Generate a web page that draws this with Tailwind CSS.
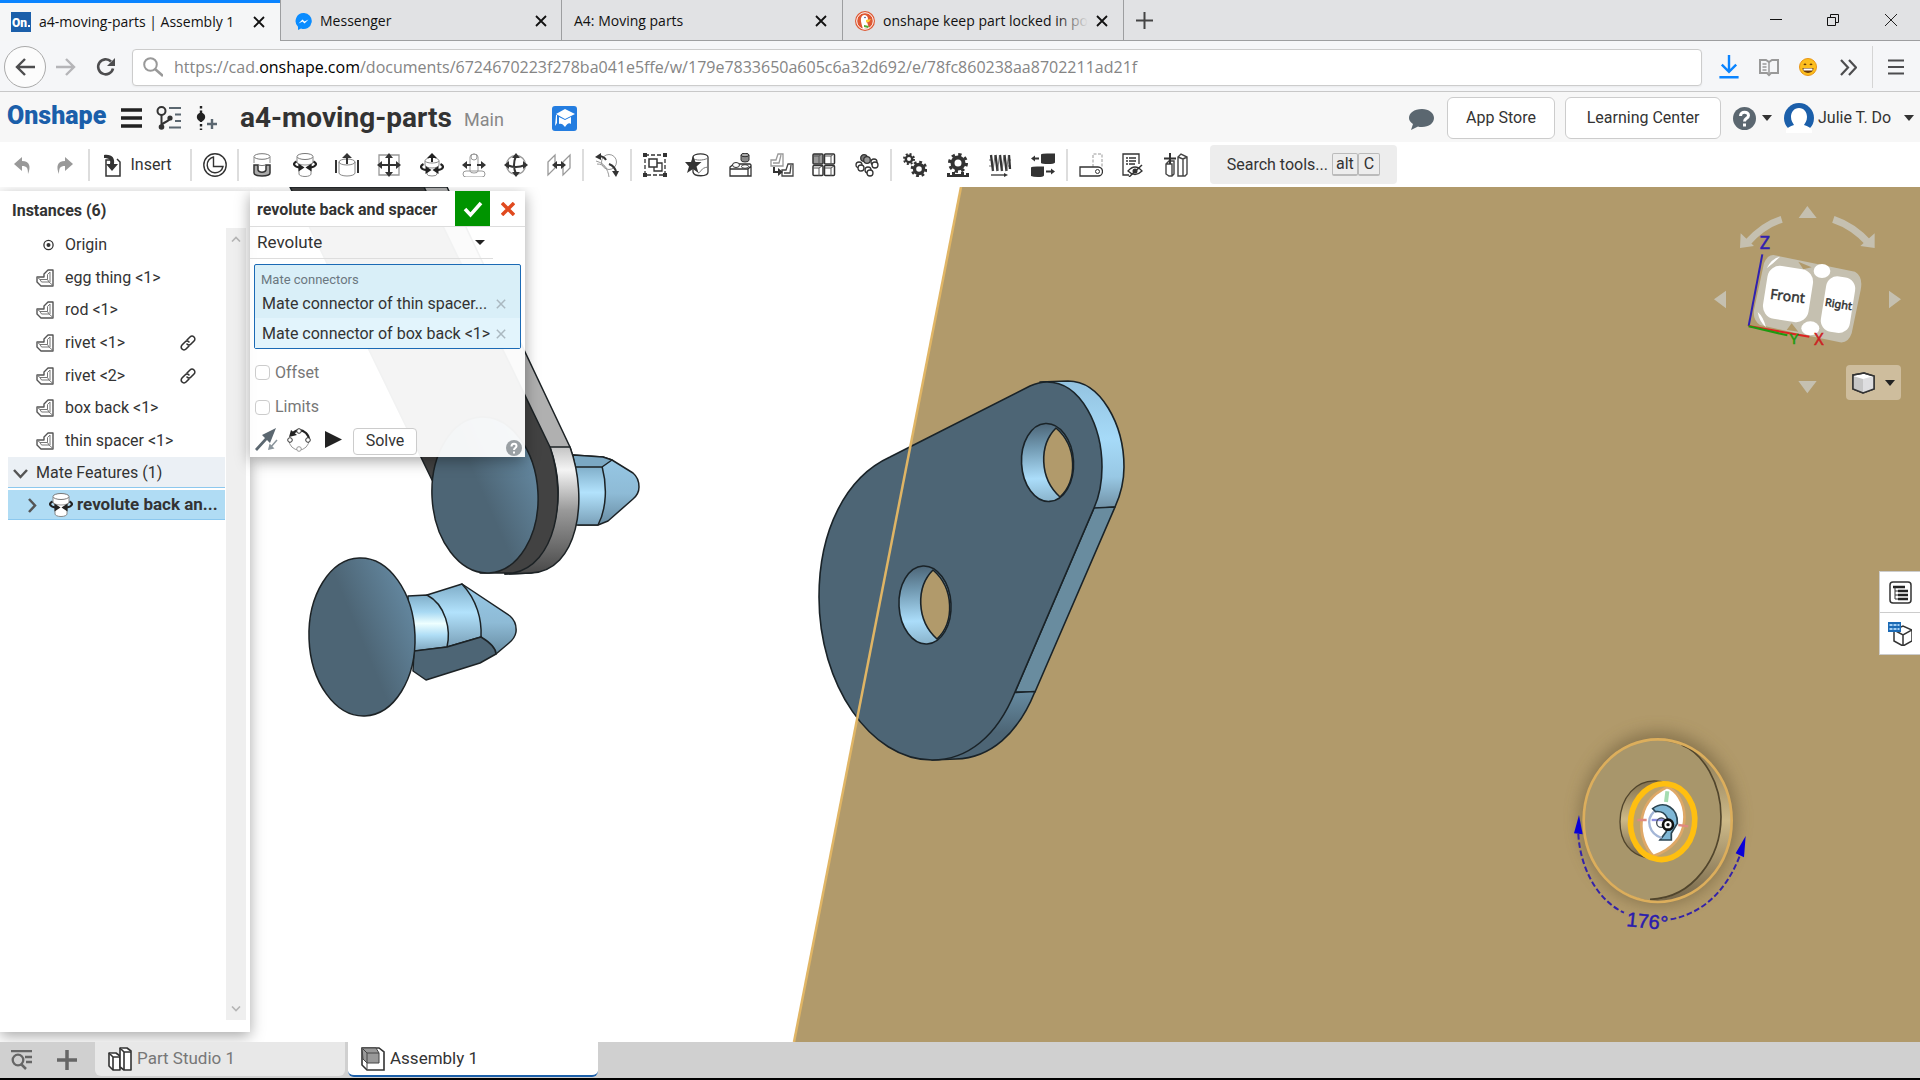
<!DOCTYPE html>
<html lang="en">
<head>
<meta charset="utf-8">
<title>a4-moving-parts | Assembly 1</title>
<script src="https://cdn.jsdelivr.net/npm/@tailwindcss/browser@4"></script>
</head>
<body class="flex h-screen flex-col overflow-hidden bg-white font-['Roboto',sans-serif] text-base text-[#333]">

<svg class="hidden" aria-hidden="true">
  <symbol id="part" viewBox="0 0 18 18"><path d="M1 8h7V5l4-4h5v16H5l-4-4z" fill="#fff" stroke="#555" stroke-width="1.400" stroke-linejoin="round"/><path d="M4 10.500h7.500V5.500L14 3v10M4 10.500L5.500 13H13l4 3.500M11.500 10.500L13 13M1 8l3 2.500" fill="none" stroke="#777"/></symbol>
  <symbol id="link" viewBox="0 0 16 16"><g fill="none" stroke="#333" stroke-width="1.600" stroke-linecap="round"><path d="M7 5l3-3a2.600 2.600 0 0 1 4 4l-3 3a2.600 2.600 0 0 1-4 0"/><path d="M9 11l-3 3a2.600 2.600 0 0 1-4-4l3-3a2.600 2.600 0 0 1 4 0"/></g></symbol>
  <symbol id="revolute" viewBox="0 0 24 24"><path d="M4 4v5c0 2 2 2 2 4v8a6 2.500 0 0 0 12 0v-8c0-2 2-2 2-4V4" fill="#fff" stroke="#888"/><path d="M4 9a8 3 0 0 0 16 0" fill="none" stroke="#999"/><ellipse cx="12" cy="3.500" rx="8" ry="3" fill="#fff" stroke="#777"/><path d="M3.500 8.500c-4 2-3 5 3 6M20.500 8.500c4 2 3 5-3 6" fill="none" stroke="#222" stroke-width="2.200"/><path d="M11.500 14.500l-6-4v8zM12.500 14.500l6-4v8z" fill="#222"/></symbol>
  <symbol id="close" viewBox="0 0 12 12"><path d="M1 1l10 10M11 1L1 11" fill="none" stroke="currentColor" stroke-width="1.800"/></symbol>
</svg>

<!-- Browser tabs -->
<header class="shrink-0 font-['Open_Sans',sans-serif] text-sm text-[#111]">
  <div class="flex h-[41px] border-b border-[#9d9ea0] bg-[#e1e2e4]">
    <div class="-mb-px flex w-[280px] items-center gap-2 border-t-[3px] border-[#0a84ff] bg-[#f5f6f7] pr-[15px] pb-px pl-[11px]">
      <svg class="size-5 shrink-0" viewBox="0 0 20 20"><path d="M0 0h20v20H0z" fill="#1b5faa"/><text x="1" y="15" font-family="Roboto" font-weight="900" font-size="12" fill="#fff">On</text><path d="M17 13h2v2h-2z" fill="#fff"/></svg>
      <span class="flex-1 whitespace-nowrap">a4-moving-parts | Assembly 1</span>
      <button aria-label="Close tab"><svg class="size-3"><use href="#close"/></svg></button>
    </div>
    <div class="flex w-[282px] items-center gap-2 border-r border-l border-[#9d9ea0] px-[14px] pt-[2px]">
      <svg class="size-[17px]" viewBox="0 0 17 17"><path d="M8.500 0a8 8 0 0 0-5.500 13.700V17l3-1.500A8 8 0 1 0 8.500 0z" fill="#0a8cff"/><path d="M3.500 10.500l4-4 2 2 4-2-4 4-2-2z" fill="#fff"/></svg>
      <span class="flex-1">Messenger</span>
      <button aria-label="Close tab"><svg class="size-3"><use href="#close"/></svg></button>
    </div>
    <div class="flex w-[281px] items-center gap-2 border-r border-[#9d9ea0] pt-[2px] pr-[15px] pl-3">
      <span class="flex-1">A4: Moving parts</span>
      <button aria-label="Close tab"><svg class="size-3"><use href="#close"/></svg></button>
    </div>
    <div class="flex w-[281px] items-center gap-2 border-r border-[#9d9ea0] pt-[2px] pr-[15px] pl-3">
      <svg class="size-5 shrink-0" viewBox="0 0 20 20"><circle cx="10" cy="10" r="10" fill="#de5833"/><circle cx="10" cy="10" r="8.300" fill="none" stroke="#fff"/><path d="M8 18C6 11 5 8 7 5c2-2 6-1 6 3l-1 3 2 6z" fill="#fff"/><path d="M11 9l5-1-2 3-3 .5z" fill="#fc3"/><path d="M9 14l5 1-1 2-4-1z" fill="#5a3"/><circle cx="10" cy="6.500" r=".8" fill="#2a4b8d"/></svg>
      <span class="relative flex-1 overflow-hidden whitespace-nowrap">onshape keep part locked in po<span class="absolute inset-y-0 right-0 w-8 bg-linear-to-r from-transparent to-[#e1e2e4]"></span></span>
      <button aria-label="Close tab"><svg class="size-3"><use href="#close"/></svg></button>
    </div>
    <button class="px-3" aria-label="New tab"><svg class="size-[17px]" viewBox="0 0 17 17"><path d="M8.500 0v17M0 8.500h17" stroke="#444" stroke-width="2"/></svg></button>
    <div class="ml-auto flex items-center gap-[45px] pr-[22px]">
      <button aria-label="Minimize"><svg class="size-3" viewBox="0 0 12 12"><path d="M0 5.500h12" stroke="#111"/></svg></button>
      <button aria-label="Restore"><svg class="size-3" viewBox="0 0 12 12"><path d="M.5 3.500h8v8h-8zM3.500 3.500v-3h8v8h-3" fill="none" stroke="#111"/></svg></button>
      <button aria-label="Close window"><svg class="size-[14px]" viewBox="0 0 14 14"><path d="M1 1l12 12M13 1L1 13" stroke="#222"/></svg></button>
    </div>
  </div>
  <!-- Address bar -->
  <div class="flex h-[51px] items-center border-b border-[#c8c8c8] bg-[#f5f6f8] pt-[2px] text-[#777]">
    <button class="ml-1 flex size-[42px] items-center justify-center rounded-full border border-[#aaa] bg-[#fcfcfc]" aria-label="Back"><svg class="size-5" viewBox="0 0 20 20"><path d="M20 10H2M10 2l-8 8 8 8" fill="none" stroke="#4d4d4f" stroke-width="2.400"/></svg></button>
    <button class="ml-[10px]" aria-label="Forward"><svg class="size-5" viewBox="0 0 20 20"><path d="M0 10h18M10 2l8 8-8 8" fill="none" stroke="#b5b5b8" stroke-width="2.400"/></svg></button>
    <button class="ml-5" aria-label="Reload"><svg class="size-5" viewBox="0 0 20 20"><path d="M17 11.500a7.500 7.500 0 1 1-2-7" fill="none" stroke="#4d4d4f" stroke-width="2.600"/><path d="M19 1v8h-8z" fill="#4d4d4f"/></svg></button>
    <div class="ml-4 flex h-[37px] flex-1 items-center gap-[11px] rounded-sm border border-[#ccc] bg-white px-[10px] shadow-xs">
      <svg class="size-5" viewBox="0 0 20 20"><circle cx="7.500" cy="7.500" r="6.300" fill="none" stroke="#999" stroke-width="2"/><path d="M12 12l8 7" stroke="#999" stroke-width="2.600"/></svg>
      <div role="textbox" aria-label="Address" contenteditable="true" class="text-base whitespace-nowrap text-[#858585]">https://cad.<span class="text-black">onshape.com</span>/documents/6724670223f278ba041e5ffe/w/179e7833650a605c6a32d692/e/78fc860238aa8702211ad21f</div>
    </div>
    <div class="flex items-center gap-5 pr-[15px] pl-[17px]">
      <button aria-label="Downloads"><svg class="h-6 w-5" viewBox="0 0 16 20"><path d="M8 0v13M2 8l6 6 6-6M0 18.500h16" fill="none" stroke="#0a84ff" stroke-width="2"/></svg></button>
      <button aria-label="Reader"><svg class="size-5" viewBox="0 0 20 18"><path d="M1 2h6l3 2 3-2h6v13h-7l-2 2-2-2H1z" fill="none" stroke="#999" stroke-width="2"/><path d="M10 4v11M3.500 6h4M3.500 9h4M3.500 12h4" stroke="#999" stroke-width="1.500"/></svg></button>
      <button aria-label="Emoji"><svg class="size-[18px]" viewBox="0 0 18 18"><circle cx="9" cy="9" r="8.500" fill="#fcbe1c" stroke="#e89515"/><path d="M3.500 10h11a5.500 5 0 0 1-11 0z" fill="#6b3a0a"/><path d="M4.500 10.500h9v2h-9z" fill="#fff"/><path d="M5 7q1-2 2 0M11 7q1-2 2 0" fill="none" stroke="#5b3208" stroke-width="1.200"/></svg></button>
      <button class="ml-[3px]" aria-label="More tools"><svg class="size-[17px]" viewBox="0 0 17 17"><path d="M1 1l7 7.500L1 16M9 1l7 7.500L9 16" fill="none" stroke="#4d4d4f" stroke-width="2.200"/></svg></button>
    </div>
    <div class="flex h-[42px] items-center border-l border-[#d5d5d5] pr-4 pl-[15px]"><button aria-label="Menu"><svg class="size-4" viewBox="0 0 16 16"><path d="M0 1.500h16M0 8h16M0 14.500h16" stroke="#4d4d4f" stroke-width="2"/></svg></button></div>
  </div>
</header>

<!-- Document header -->
<div class="flex h-[50px] shrink-0 items-center bg-[#f7f7f7] pt-[2px] pr-[6px] pl-[7px]">
  <a href="#" class="w-[98px] pb-1 text-[25px] font-black text-[#1b5faa]">Onshape</a>
  <button class="ml-4" aria-label="Main menu"><svg class="h-5 w-[21px]" viewBox="0 0 21 20"><path d="M0 2h21M0 10h21M0 18h21" stroke="#222" stroke-width="3.500"/></svg></button>
  <button class="ml-[14px]" aria-label="Versions"><svg class="size-[26px]" viewBox="0 0 26 26"><circle cx="5.500" cy="6" r="4" fill="none" stroke="#333" stroke-width="2"/><path d="M5.500 10v12M5.500 21c1-5 8-3 9-9" fill="none" stroke="#333" stroke-width="2"/><circle cx="5.500" cy="22" r="2.800" fill="#333"/><circle cx="14" cy="13" r="2.600" fill="#333"/><path d="M13 3h12M19 9.500h6M19 16h6M13 22.500h12" stroke="#5b6770" stroke-width="2"/></svg></button>
  <button class="ml-[14px]" aria-label="Create version"><svg class="h-6 w-[22px]" viewBox="0 0 22 24"><path d="M5 0v24" stroke="#222" stroke-width="2.400" stroke-dasharray="2.500 2"/><circle cx="5" cy="11" r="4.200" fill="#222"/><path d="M16 13v10M11 18h10" stroke="#5b6770" stroke-width="2.400"/></svg></button>
  <h1 class="ml-[22px] w-[216px] text-[28px] font-bold whitespace-nowrap">a4-moving-parts</h1>
  <span class="ml-2 w-[88px] pt-1 text-lg text-[#888]">Main</span>
  <button aria-label="Education"><svg class="size-[25px]" viewBox="0 0 25 25"><rect width="25" height="25" rx="3" fill="#247de0"/><path d="M13 3l10 5-10 5-9-5z" fill="#fff"/><path d="M7 11l6 3 6-3v7c-2-2-4 0-6 3-2-3-4-4-6-3zM4 9h1v8l-2 3z" fill="#fff"/></svg></button>
  <div class="ml-auto flex items-center">
    <button aria-label="Comments"><svg class="size-[25px]" viewBox="0 0 25 25"><path d="M13 3C20 3 25 7 25 12s-5 9-12 9c-2 0-3 0-4-.6L2 24l2-6C1 16 0 14 0 12c0-5 5-9 13-9z" fill="#5b6770"/></svg></button>
    <button class="ml-[13px] h-[42px] w-[108px] rounded-md border border-[#ccc] bg-white">App Store</button>
    <button class="ml-[10px] h-[42px] w-[156px] rounded-md border border-[#ccc] bg-white">Learning Center</button>
    <button class="ml-3 flex items-center gap-[6px]" aria-label="Help"><svg class="size-[23px]" viewBox="0 0 23 23"><circle cx="11.500" cy="11.500" r="11.500" fill="#5b6770"/><path d="M7.500 9c0-5 8-5 8-.5 0 3-4 2.500-4 6" fill="none" stroke="#fff" stroke-width="3"/><path d="M10 16.500h3v3h-3z" fill="#fff"/></svg><svg class="h-[6px] w-[10px]" viewBox="0 0 10 6"><path d="M0 0h10L5 6z" fill="#333"/></svg></button>
    <button class="ml-3 flex items-center gap-1"><svg class="size-[30px]" viewBox="0 0 30 30"><circle cx="15" cy="15" r="15" fill="#1b5faa"/><path d="M15 5c5 0 8 4 8 9 0 4-2 6-3 8 4 1 7 3 8 5v3H2v-3c1-2 4-4 8-5-1-2-3-4-3-8 0-5 3-9 8-9z" fill="#fff"/></svg><span class="w-[82px] text-left whitespace-nowrap">Julie T. Do</span><svg class="h-[6px] w-[10px]" viewBox="0 0 10 6"><path d="M0 0h10L5 6z" fill="#333"/></svg></button>
  </div>
</div>

<!-- Assembly toolbar -->
<div class="flex h-[45px] shrink-0 items-center bg-white [&_svg]:size-6 [&_button]:flex [&_button]:items-center [&_button]:justify-center">
  <div class="flex w-[86px]">
    <button class="flex-1" aria-label="Undo"><svg viewBox="0 0 24 24"><path d="M4 11l8-7v4c8 0 9 6 6 13 0-6-1-8-6-8v5z" fill="#999"/></svg></button>
    <button class="flex-1" aria-label="Redo"><svg viewBox="0 0 24 24"><path d="M20 11l-8-7v4c-8 0-9 6-6 13 0-6 1-8 6-8v5z" fill="#999"/></svg></button>
  </div>
  <div class="mx-[2px] h-8 w-[2px] bg-[#ddd]"></div>
  <button class="w-24 gap-[6px] pr-2"><svg viewBox="0 0 24 24"><path d="M10 7H5v16h14V9l-3-3" fill="#fff" stroke="#333" stroke-width="1.500"/><path d="M3 2c8-1 11 3 10 9h4l-6 7-6-7h4c1-4-1-6-6-6z" fill="#333"/></svg>Insert</button>
  <div class="mx-[2px] h-8 w-[2px] bg-[#ddd]"></div>
  <button class="w-[41px]" aria-label="Mate connector"><svg viewBox="0 0 24 24"><g fill="none" stroke="#333" stroke-width="1.400"><circle cx="12" cy="12" r="11.200"/><path d="M10.500 4v9.500H20A8 8 0 1 1 10.500 4z"/></g></svg></button>
  <div class="mx-[2px] h-8 w-[2px] bg-[#ddd]"></div>
  <div class="flex w-[339px] [&_button]:flex-1">
    <button aria-label="Fastened mate"><svg viewBox="0 0 24 24"><path d="M4 4v6M20 4v6" stroke="#888"/><ellipse cx="12" cy="3.500" rx="8" ry="2.800" fill="#fff" stroke="#777"/><path d="M4 12v8a8 3 0 0 0 16 0v-8h-4v5c-1 3-7 3-8 0v-5z" fill="#aaa" stroke="#333" stroke-width="1.500"/><path d="M8 12a6 2 0 0 0 8 0" fill="none" stroke="#777"/></svg></button>
    <button aria-label="Revolute mate"><svg><use href="#revolute"/></svg></button>
    <button aria-label="Slider mate"><svg viewBox="0 0 24 24"><path d="M4 9v11a8 3 0 0 0 16 0V9M4 9a8 3 0 0 0 16 0 8 3 0 0 0-16 0" fill="none" stroke="#888"/><path d="M1 7v13M23 7v13" stroke="#333" stroke-width="2"/><path d="M12 0l5 5h-4v6h-2V5H7z" fill="#333"/></svg></button>
    <button aria-label="Planar mate"><svg viewBox="0 0 24 24"><path d="M2 2h20v20H2z" fill="none" stroke="#999" stroke-width="1.300"/><path d="M12 3v18M3 12h18" stroke="#333" stroke-width="2"/><path d="M12 0l4 5H8zM12 24l4-5H8zM0 12l5-4v8zM24 12l-5-4v8z" fill="#333"/></svg></button>
    <button aria-label="Cylindrical mate"><svg viewBox="0 0 24 24"><path d="M5 8v4a7 3 0 0 0 14 0V8M9 5C2 7 5 10 12 10s10-3 3-5M7 16v5a5 2 0 0 0 10 0v-5" fill="none" stroke="#888"/><path d="M3.500 11c-4 2-3 5.500 3 6M20.500 11c4 2 3 5.500-3 6" fill="none" stroke="#222" stroke-width="2.200"/><path d="M11.500 17l-6-4v8zM12.500 17l6-4v8zM12 0l5 5h-4v4h-2V5H7z" fill="#222"/></svg></button>
    <button aria-label="Pin slot mate"><svg viewBox="0 0 24 24"><path d="M8 18V4a4 3 0 0 1 8 0v14M4 18h16a3 3 0 0 1 0 6H4a3 3 0 0 1 0-6M8 18a4 2 0 0 0 8 0" fill="none" stroke="#999"/><circle cx="12" cy="4" r="3" fill="none" stroke="#999"/><path d="M0 12l5-4v3h4v2H5v3zM24 12l-5-4v3h-4v2h4v3z" fill="#333"/></svg></button>
    <button aria-label="Ball mate"><svg viewBox="0 0 24 24"><circle cx="12" cy="12" r="9.500" fill="none" stroke="#999" stroke-width="1.300"/><path d="M12 3q-4 9 0 18M3 12q9 4 18 0" fill="none" stroke="#333" stroke-width="2"/><path d="M12 0l4 5H8zM12 24l4-5H8zM0 12l5-4v8zM24 12l-5-4v8z" fill="#333"/></svg></button>
    <button aria-label="Parallel mate"><svg viewBox="0 0 24 24"><path d="M1 9l7-7v13l-7 7zM16 9l7-7v13l-7 7z" fill="none" stroke="#999" stroke-width="1.300"/><path d="M5 12l5-4v3h4V8l5 4-5 4v-3h-4v3z" fill="#333"/></svg></button>
  </div>
  <div class="mx-[2px] h-8 w-[2px] bg-[#ddd]"></div>
  <button class="w-[42px]" aria-label="Tangent mate"><svg viewBox="0 0 24 24"><circle cx="14" cy="9" r="7.500" fill="none" stroke="#999"/><path d="M2 11c7 0 11 5 12 13M1 8c4 1 9 4 11 8" fill="none" stroke="#999"/><path d="M3 3q6 0 8 4M14 11q7 3 7 9" fill="none" stroke="#333" stroke-width="2"/><path d="M0 4l6-4v7zM21 24l-4-6h7z" fill="#333"/></svg></button>
  <div class="mx-[2px] h-8 w-[2px] bg-[#ddd]"></div>
  <div class="flex w-[254px] [&_button]:flex-1">
    <button aria-label="Group"><svg viewBox="0 0 24 24"><path d="M2 2h20v20H2z" fill="none" stroke="#333" stroke-width="1.300" stroke-dasharray="4 2"/><path d="M0 0h4v4H0zM20 0h4v4h-4zM0 20h4v4H0zM20 20h4v4h-4z" fill="#333"/><path d="M11 10h8v8h-8z" fill="#fff" stroke="#333" stroke-width="1.300"/><path d="M6 6h8v8H6z" fill="#fff" stroke="#333" stroke-width="1.500"/></svg></button>
    <button aria-label="Mate feature"><svg viewBox="0 0 24 24"><path d="M8 4a7 3 0 0 1 15 0v15c0 5-14 5-15 0z" fill="#fff" stroke="#333" stroke-width="1.300"/><path d="M9 6c4 2 11 1 14-1M13 20c4-1 2-5 10-6" fill="none" stroke="#777"/><path d="M8 3l2.500 6h6l-5 4.500 2 6.500L8 16l-6 4 2-6.500L0 9h6z" fill="#333"/></svg></button>
    <button aria-label="Replicate"><svg viewBox="0 0 24 24"><path d="M2 14l4-3h16l1 1v11H2zM2 16h18v7M20 16l3-3" fill="none" stroke="#333" stroke-width="1.300"/><ellipse cx="8" cy="12" rx="3.500" ry="2.500" fill="#fff" stroke="#333"/><ellipse cx="17" cy="13.500" rx="3.500" ry="1.800" fill="#fff" stroke="#333"/><path d="M13 2v5a4 2 0 0 0 8 0V2z" fill="#888" stroke="#333"/><ellipse cx="17" cy="2" rx="4" ry="1.700" fill="#aaa" stroke="#333"/></svg></button>
    <button aria-label="Transform"><svg viewBox="0 0 24 24"><path d="M1 7h5l2-6h5v12H1zM3 10h6l2-8" fill="none" stroke="#999" stroke-width="1.300"/><path d="M12 17h4l2-6h5v12H12zM14 20h6l1-8" fill="#fff" stroke="#444" stroke-width="1.300"/><path d="M4 14v5h5" fill="none" stroke="#333" stroke-width="2"/><path d="M8 15l5 4-5 4z" fill="#333"/></svg></button>
    <button aria-label="Linear pattern"><svg viewBox="0 0 24 24"><g fill="#fff" stroke="#333" stroke-width="1.500"><rect x="1" y="1" width="10" height="10" rx="1" fill="#999"/><rect x="12.500" y="1" width="10" height="10" rx="1"/><rect x="1" y="12.500" width="10" height="10" rx="1"/><rect x="12.500" y="12.500" width="10" height="10" rx="1"/></g><path d="M1 3h6l3-2M7 3v8M13 3h6l3-2M19 3v8M1 15h6l3-2M7 15v8M13 15h6l3-2M19 15v8" fill="none" stroke="#555"/></svg></button>
    <button aria-label="Circular pattern"><svg viewBox="0 0 24 24"><g fill="#fff" stroke="#333" stroke-width="1.300"><circle cx="9" cy="5" r="3.300" fill="#777"/><circle cx="12" cy="7" r="3.300" fill="#999"/><circle cx="19" cy="9" r="3"/><circle cx="20" cy="12" r="3"/><circle cx="4" cy="12" r="3"/><circle cx="6" cy="15" r="3"/><circle cx="13" cy="17" r="3"/><circle cx="15" cy="20" r="3"/></g></svg></button>
  </div>
  <div class="mx-[2px] h-8 w-[2px] bg-[#ddd]"></div>
  <div class="flex w-[170px] [&_button]:flex-1">
    <button aria-label="Gear relation"><svg viewBox="0 0 24 24"><g fill="none" stroke="#333"><circle cx="6" cy="6" r="3.200" stroke-width="2.400"/><circle cx="6" cy="6" r="5" stroke-width="2" stroke-dasharray="2 1.930"/><circle cx="16" cy="16" r="4.500" stroke-width="3.400"/><circle cx="16" cy="16" r="7" stroke-width="2.600" stroke-dasharray="2.800 2.700"/></g></svg></button>
    <button aria-label="Rack and pinion"><svg viewBox="0 0 24 24"><g fill="none" stroke="#333"><circle cx="12" cy="10" r="5.500" stroke-width="4"/><circle cx="12" cy="10" r="8.500" stroke-width="3" stroke-dasharray="3.300 3.370"/></g><path d="M1 24v-4h3v2h2v-3h3v2h6v-2h3v3h2v-2h3v4z" fill="#333"/></svg></button>
    <button aria-label="Screw relation"><svg viewBox="0 0 24 24"><path d="M1 7h3M1 13h3M20 7h3M20 13h3" stroke="#777"/><path d="M3 2l2 16M7.500 2l2 16M12 2l2 16M16.500 2l2 16M21 2l1 14" stroke="#333" stroke-width="2.300"/><path d="M5 18L7 2M9.500 18l2-16M14 18l2-16M18.500 18l2-16" stroke="#555" stroke-width=".8"/><path d="M3 22h14" stroke="#333" stroke-width="1.300"/><path d="M16 20l4 2-4 2z" fill="#333"/></svg></button>
    <button aria-label="Linear relation"><svg viewBox="0 0 24 24"><path d="M10 1.500q1-1 6-1h8v9q-1 1.500-7 1.500t-7-1zM0 14.500q1-1 6-1h7v9q-1 1.500-6 1.500t-7-1zM0 5.500l4-3v2h4v2H4v2zM24 18.500l-4-3v2h-5v2h5v2z" fill="#333"/></svg></button>
  </div>
  <div class="mx-[2px] h-8 w-[2px] bg-[#ddd]"></div>
  <div class="flex w-[127px] [&_button]:flex-1">
    <button aria-label="Named position"><svg viewBox="0 0 24 24"><path d="M14 14V1h9v13" fill="none" stroke="#999" stroke-dasharray="3 1.500"/><path d="M1 14h18a4.500 4.500 0 0 1 0 9H1z" fill="#fff" stroke="#333" stroke-width="1.300"/><circle cx="18.500" cy="18.500" r="2" fill="none" stroke="#333"/></svg></button>
    <button aria-label="Hide list"><svg viewBox="0 0 24 24"><path d="M18 11V1H2v21h6" fill="none" stroke="#333" stroke-width="1.300"/><path d="M5 5h2M8 5h7M5 8h2M8 8h7M5 11h2M8 11h6" stroke="#333" stroke-width="1.400"/><path d="M7 18q7-8 14 0-7 7-14 0z" fill="#fff" stroke="#333" stroke-width="1.300"/><circle cx="14" cy="18" r="2.500" fill="#333"/><path d="M8 24L21 12" stroke="#333" stroke-width="1.500"/></svg></button>
    <button aria-label="Add part in context"><svg viewBox="0 0 24 24"><path d="M2 11l3-3h5v13l-2 2H5l-3-2zM14 4l3-3 6 3v17l-2 2h-7zM14 4l5 2v17M19 6l4-2M2 11h6v12" fill="none" stroke="#444" stroke-width="1.400"/><path d="M6 0v11M0 5.500h12" stroke="#333" stroke-width="2"/></svg></button>
  </div>
  <button class="ml-[13px] h-[39px] w-[187px] rounded bg-[#ededed]">Search tools...<kbd class="ml-1 rounded-xs border border-b-2 border-[#bbb] px-[3px] font-['Roboto',sans-serif] text-base leading-5">alt</kbd><kbd class="rounded-xs border border-b-2 border-[#bbb] px-[5px] font-['Roboto',sans-serif] text-base leading-5">C</kbd></button>
</div>

<!-- Workspace -->
<main class="relative min-h-0 flex-1 overflow-hidden bg-white">
  <svg class="absolute inset-0 h-full w-full" viewBox="0 187 1920 855" preserveAspectRatio="xMinYMin slice" aria-label="3D view">
    <defs>
      <linearGradient id="disc" x1=".2" y1=".65" x2="1" y2=".2"><stop offset=".35" stop-color="#4d6575"/><stop offset="1" stop-color="#668ba4"/></linearGradient>
      <linearGradient id="shaft" x1="0" y1="0" x2="0" y2="1"><stop offset="0" stop-color="#7fadc8"/><stop offset=".45" stop-color="#b2e2fc"/><stop offset="1" stop-color="#7aa0b8"/></linearGradient>
      <linearGradient id="neck" x1="0" y1="0" x2="0" y2="1"><stop offset="0" stop-color="#7fadc8"/><stop offset=".3" stop-color="#a8d9f3"/><stop offset=".5" stop-color="#eeffff"/><stop offset=".7" stop-color="#b0def6"/><stop offset="1" stop-color="#7aa0b8"/></linearGradient>
      <linearGradient id="tip" x1="0" y1="0" x2="0" y2="1"><stop offset="0" stop-color="#97c8e6"/><stop offset=".55" stop-color="#8ebbd6"/><stop offset="1" stop-color="#688ca2"/></linearGradient>
      <linearGradient id="steel" x1="0" y1="0" x2="0" y2="1"><stop offset="0" stop-color="#c4c4c4"/><stop offset=".18" stop-color="#f4f4f4"/><stop offset=".5" stop-color="#999"/><stop offset="1" stop-color="#484848"/></linearGradient>
      <linearGradient id="rim" x1="0" y1="0" x2="0" y2="1"><stop offset="0" stop-color="#93c3e0"/><stop offset=".45" stop-color="#a6daf8"/><stop offset=".75" stop-color="#98c8e4"/><stop offset="1" stop-color="#7090a4"/></linearGradient>
      <linearGradient id="rimlow" x1="0" y1="0" x2="0" y2="1"><stop offset="0" stop-color="#668ba1"/><stop offset=".6" stop-color="#4d6575"/></linearGradient>
      <linearGradient id="bore" x1="0" y1="0" x2="0" y2="1"><stop offset="0" stop-color="#4d6678"/><stop offset=".3" stop-color="#7199b1"/><stop offset=".7" stop-color="#abddfa"/><stop offset="1" stop-color="#89b3cb"/></linearGradient>
      <linearGradient id="brass" x1="0" y1="0" x2="0" y2="1"><stop offset="0" stop-color="#81704d"/><stop offset=".5" stop-color="#cdb988"/><stop offset="1" stop-color="#75664a"/></linearGradient>
      <filter id="glow" x="-30%" y="-30%" width="160%" height="160%"><feGaussianBlur stdDeviation="24"/></filter>
    </defs>
    <path d="M961 187H1920V1042H794z" fill="#b19a6b"/>

    <!-- lever with rivet -->
    <g stroke="#1c2225" stroke-width="1.500" stroke-linejoin="round">
      <path d="M573 455L603 457 612 460 633 473Q639 478 639 487 639 494 633 499L608 521 598 525 578 525z" fill="url(#tip)"/>
      <path d="M573 466H602C607 485 607 508 598 525H573z" fill="url(#shaft)"/>
      <path d="M573 455L603 457 612 460 602 467H573z" fill="#7ba8c3"/>
      <path d="M424 187H447L570 447C586 494 580 565 531 573L505 574z" fill="#b0b0b0"/>
      <path d="M550 447H570C589 500 578 571 531 573L505 574C555 560 569 500 550 447z" fill="url(#steel)"/>
      <path d="M290 187H424L550 447C568 500 555 565 513 573L480 573 432 480z" fill="#424242"/>
      <ellipse cx="485" cy="495" rx="53" ry="78" transform="rotate(-3 485 495)" fill="url(#disc)"/>
    </g>

    <!-- loose rivet -->
    <g stroke="#1c2225" stroke-width="1.500" stroke-linejoin="round">
      <path d="M462 584L510 616Q517 622 516 632 515 638 509 643L496 654 481 637z" fill="url(#tip)"/>
      <path d="M427 595L462 584C477 600 482 620 481 637L447 647z" fill="url(#shaft)"/>
      <path d="M408 596L427 595C446 605 451 630 447 647L408 652z" fill="url(#neck)"/>
      <path d="M414 651L447 647 481 637Q496 646 496 654L480 663 426 680 413 671z" fill="#4d6575"/>
      <ellipse cx="362" cy="637" rx="53" ry="79" transform="rotate(-2 362 637)" fill="url(#disc)"/>
    </g>

    <!-- egg-shaped plate -->
    <g stroke="#1a2328" stroke-width="1.600" stroke-linejoin="round">
      <path d="M1040 382L1068 381C1101 381 1124 425 1124 467 1124 482 1120 496 1115 507L1090 509z" fill="url(#rim)"/>
      <path d="M1094 508L1115 507 1035 692H1015z" fill="#698c9f"/>
      <path d="M1015 692.500L1035 691.500C1018 734 990 758 956 759L932 760z" fill="url(#rimlow)"/>
      <path d="M1030 386C1037 383 1042 382 1047 382 1082 382 1102 428 1102 467 1102 484 1099 497 1094 508L1015 692C997 736 968 760 932 760 870 760 819 684 819 597 819 530 846 477 890 457z" fill="#4d6575"/>
      <ellipse cx="1047.500" cy="462.500" rx="26" ry="39" transform="rotate(-3 1047 462)" fill="url(#bore)"/>
      <path d="M1056 428C1039 445 1039 478 1060 497 1078 480 1077 446 1056 428z" fill="#b19a6b"/>
      <ellipse cx="925" cy="605" rx="26" ry="39" transform="rotate(-3 925 605)" fill="url(#bore)"/>
      <path d="M933 570C916 587 916 620 937 639 955 622 954 588 933 570z" fill="#b19a6b"/>
    </g>
    <path d="M961 187L794 1042" stroke="#e0b565" stroke-width="2.500"/>

    <!-- selected spacer and mate connector -->
    <g transform="translate(1550 710) scale(.33333)">
      <ellipse cx="325" cy="325" rx="235" ry="260" fill="#6e5d3a" opacity=".6" filter="url(#glow)"/>
      <ellipse cx="323" cy="332" rx="222" ry="244" fill="url(#brass)"/>
      <path d="M323 88C180 88 102 210 102 332S200 574 315 570C430 560 513 430 513 320 513 220 460 130 395 105z" fill="#a8966b"/>
      <path d="M395 105C460 130 513 220 513 320 513 440 430 565 300 568" fill="none" stroke="#51452c" stroke-width="5"/>
      <ellipse cx="323" cy="332" rx="222" ry="244" fill="none" stroke="#dcae5c" stroke-width="8"/>
      <path d="M335 215C255 200 210 270 210 335S245 432 285 442z" fill="url(#brass)" stroke="#51452c" stroke-width="4"/>
      <ellipse cx="338" cy="335" rx="96" ry="112" fill="#bda26b"/>
      <path d="M350 232C250 280 262 390 310 438 430 400 420 270 360 235z" fill="#fff" stroke="#dfa866" stroke-width="8"/>
      <ellipse cx="338" cy="335" rx="96" ry="114" transform="rotate(8 338 335)" fill="none" stroke="#ffbf10" stroke-width="17"/>
      <path d="M352 244L348 276" stroke="#a5dcb0" stroke-width="12"/>
      <path d="M262 330H290M385 345L415 349" stroke="#e08a80" stroke-width="7"/>
      <path d="M308 296C345 268 384 296 382 340L364 370V390H330L348 366C366 335 348 300 316 305z" fill="#7fb7d6" stroke="#2c4654" stroke-width="5"/>
      <path d="M312 305C285 330 298 372 335 384" fill="none" stroke="#a4b6d6" stroke-width="7"/>
      <path d="M305 330H345" stroke="#8f8fe0" stroke-width="7"/>
      <circle cx="334" cy="338" r="14" fill="none" stroke="#45505a" stroke-width="4"/>
      <circle cx="354" cy="344" r="15" fill="#fff" stroke="#111" stroke-width="8"/><circle cx="354" cy="344" r="5" fill="#111"/>
      <path d="M85 372C90 470 140 570 222 608M362 628C460 610 530 540 570 436" fill="none" stroke="#3423a8" stroke-width="6" stroke-dasharray="17 8"/>
      <path d="M87 315L98 373 72 370zM587 378L582 442 557 430z" fill="#0a00d8"/>
    </g>
    <text x="1626" y="926" transform="rotate(6 1626 926)" font-family="Liberation Sans" font-size="20" fill="#2a1cae" stroke="#2a1cae" stroke-width=".5">176°</text>

    <!-- view cube -->
    <g transform="translate(1690 190) scale(.33333)" fill="#c5c0b0">
      <path d="M352 48L380 84H326zM72 328L108 302V355zM633 328L597 302V355zM352 610L325 573H380z"/>
      <path d="M275 88Q220 104 170 160M430 88Q490 108 537 160" fill="none" stroke="#c5c0b0" stroke-width="21"/>
      <path d="M152 130L150 174 192 168zM554 130V174L511 168z"/>
      <path d="M250 195L495 245Q520 260 512 300L485 430Q475 460 450 457L330 432 300 425 210 405Q188 390 192 360L222 220Q232 195 250 195z"/>
      <path d="M325 215L365 232 340 238zM305 400L325 425 290 420z" fill="#b19a6b"/>
      <g fill="#fff"><rect x="225" y="232" width="138" height="160" rx="38" transform="rotate(9 294 312)"/><rect x="400" y="260" width="88" height="168" rx="34" transform="rotate(9 444 344)"/><ellipse cx="396" cy="243" rx="25" ry="21"/><ellipse cx="361" cy="415" rx="27" ry="21"/><path d="M230 235Q245 205 270 200 250 220 230 235zM203 366Q220 380 228 412 208 395 203 366z"/></g>
      <path d="M217 193L176 408" stroke="#3020b0" stroke-width="6"/><path d="M176 408L358 440" stroke="#d22" stroke-width="6"/><path d="M176 409L292 436" stroke="#1d9a10" stroke-width="6"/>
    </g>
    <g font-family="Noto Sans" text-anchor="middle" stroke-width=".5">
      <text x="1765" y="249" font-size="18" fill="#3020b0" stroke="#3020b0">Z</text>
      <text x="1794" y="344" font-size="15" fill="#1d9a10" stroke="#1d9a10">Y</text>
      <text x="1819" y="345" font-size="16" fill="#c22" stroke="#c22">X</text>
      <text x="1787" y="301" font-size="14" fill="#333" stroke="#333" transform="rotate(7 1787 301)">Front</text>
      <text x="1838" y="308" font-size="11" fill="#333" stroke="#333" transform="rotate(9 1838 308)">Right</text>
    </g>
  </svg>

  <!-- Instance list -->
  <aside class="absolute top-1 bottom-[10px] left-0 w-[250px] bg-white shadow-[0_4px_14px_rgba(0,0,0,.35)]">
    <h2 class="h-[38px] pt-2 pl-3 font-bold">Instances (6)</h2>
    <div class="absolute top-[37px] right-1 bottom-3 flex w-5 flex-col items-center justify-between bg-[#efefef] py-2">
      <svg class="h-[6px] w-[10px]" viewBox="0 0 10 6"><path d="M1 5.500l4-4 4 4" fill="none" stroke="#b5b5b5" stroke-width="1.600"/></svg>
      <svg class="h-[6px] w-[10px]" viewBox="0 0 10 6"><path d="M1 .5l4 4 4-4" fill="none" stroke="#b5b5b5" stroke-width="1.600"/></svg>
    </div>
    <ul class="flex h-[228px] w-[225px] flex-col pl-9 [&>li]:flex [&>li]:flex-1 [&>li]:items-center [&>li]:gap-[11px]">
      <li><svg class="size-[18px]" viewBox="0 0 18 18"><circle cx="12.500" cy="9" r="4.600" fill="none" stroke="#333" stroke-width="1.300"/><circle cx="12.500" cy="9" r="2" fill="#333"/></svg>Origin</li>
      <li><svg class="size-[18px]"><use href="#part"/></svg>egg thing &lt;1&gt;</li>
      <li><svg class="size-[18px]"><use href="#part"/></svg>rod &lt;1&gt;</li>
      <li><svg class="size-[18px]"><use href="#part"/></svg><span class="flex-1">rivet &lt;1&gt;</span><svg class="mr-[29px] size-4"><use href="#link"/></svg></li>
      <li><svg class="size-[18px]"><use href="#part"/></svg><span class="flex-1">rivet &lt;2&gt;</span><svg class="mr-[29px] size-4"><use href="#link"/></svg></li>
      <li><svg class="size-[18px]"><use href="#part"/></svg>box back &lt;1&gt;</li>
      <li><svg class="size-[18px]"><use href="#part"/></svg>thin spacer &lt;1&gt;</li>
    </ul>
    <button class="ml-2 flex h-[31px] w-[217px] items-center gap-2 border-b border-[#8cc8ee] bg-[#ebf0f5] pt-[2px] pl-[5px]"><svg class="size-[15px]" viewBox="0 0 15 15"><path d="M1 4l6.500 7L14 4" fill="none" stroke="#555" stroke-width="2.500"/></svg>Mate Features (1)</button>
    <button class="mt-[2px] ml-2 flex h-[30px] w-[217px] items-center border-b border-[#8cc8ee] bg-[#b0dcf4] pt-px pl-[17px] text-[17px] font-bold whitespace-nowrap"><svg class="size-[15px]" viewBox="0 0 15 15"><path d="M4 1l6 6.500L4 14" fill="none" stroke="#555" stroke-width="2.500"/></svg><svg class="mr-1 ml-[9px] size-6"><use href="#revolute"/></svg>revolute back an...</button>
  </aside>

  <!-- Mate dialog -->
  <section class="absolute top-1 left-[250px] w-[275px] bg-white/94 shadow-[0_4px_14px_rgba(0,0,0,.35)]">
    <div class="flex h-9 items-center border-b border-[#ddd] bg-white pl-[7px]">
      <h2 class="flex-1 pt-[2px] text-base font-bold whitespace-nowrap">revolute back and spacer</h2>
      <button class="flex h-[35px] w-[35px] items-center justify-center bg-[#009400]" aria-label="Accept"><svg class="size-5" viewBox="0 0 20 20"><path d="M2 10l5.500 6L18 4" fill="none" stroke="#fff" stroke-width="3.500"/></svg></button>
      <button class="flex w-[35px] items-center justify-center" aria-label="Cancel"><svg class="size-[14px]" viewBox="0 0 14 14"><path d="M1 1l12 12M13 1L1 13" stroke="#e04a1f" stroke-width="3.500"/></svg></button>
    </div>
    <div class="relative mr-8 h-8 border-b border-[#ddd]">
      <select aria-label="Mate type" class="h-full w-full appearance-none bg-transparent pt-px pl-[7px] text-[17px]"><option>Revolute</option></select>
      <svg class="pointer-events-none absolute top-[13px] right-2 h-[5px] w-[10px]" viewBox="0 0 10 5"><path d="M0 0h10L5 5z" fill="#222"/></svg>
    </div>
    <div class="mx-1 mt-[5px] h-[85px] rounded-xs border border-[#1b6ab5] bg-[#d9eff8] leading-[30px] whitespace-nowrap">
      <p class="h-[23px] pl-[6px] text-[13px] leading-[30px] text-[#6b7780]">Mate connectors</p>
      <div class="flex h-[30px] items-center pt-[2px] pl-[7px]"><span class="w-[234px]">Mate connector of thin spacer...</span><button class="text-[#aab8c0]" aria-label="Remove"><svg class="size-[10px]"><use href="#close"/></svg></button></div>
      <div class="flex h-[30px] items-center bg-[#e2f4fc] pt-[2px] pl-[7px]"><span class="w-[234px]">Mate connector of box back &lt;1&gt;</span><button class="text-[#aab8c0]" aria-label="Remove"><svg class="size-[10px]"><use href="#close"/></svg></button></div>
    </div>
    <label class="mt-[6px] ml-[5px] flex h-[35px] items-center gap-[5px] text-[#777]"><input type="checkbox" class="size-[15px] appearance-none rounded-sm border border-[#ccc] bg-white">Offset</label>
    <label class="ml-[5px] flex h-[34px] items-center gap-[5px] text-[#777]"><input type="checkbox" class="size-[15px] appearance-none rounded-sm border border-[#ccc] bg-white">Limits</label>
    <div class="flex h-[33px] items-center pb-[2px] pl-[5px]">
      <button aria-label="Flip axis"><svg class="size-[23px]" viewBox="0 0 23 23"><path d="M0 21l10-11-3-3L21 0l-6 15-3-3L2 23z" fill="#5b6770"/><path d="M22 12l-7 8M14 21l1-4 3 3z" stroke="#8a959c" stroke-width="1.500" fill="#8a959c"/></svg></button>
      <button class="ml-[9px]" aria-label="Reorient"><svg class="size-6" viewBox="0 0 24 24"><path d="M2 12a10 10 0 0 0 20 0" fill="none" stroke="#999"/><path d="M5 6Q12-1 19 5q3 3 3 7" fill="none" stroke="#222" stroke-width="2.200"/><path d="M2 9l2-7 6 5z" fill="#222"/><g fill="#fff" stroke="#333"><circle cx="12" cy="3" r="2.300"/><circle cx="3" cy="12" r="2.300"/><circle cx="21" cy="12" r="2.300"/><circle cx="12" cy="21" r="2.300" stroke="#999"/></g></svg></button>
      <button class="ml-[14px]" aria-label="Animate"><svg class="size-[17px]" viewBox="0 0 17 17"><path d="M0 0l17 8.500L0 17z" fill="#222"/></svg></button>
      <button class="mt-[3px] ml-[11px] h-[27px] w-[64px] rounded border border-[#ccc] bg-white leading-6">Solve</button>
      <button class="mt-4 mr-[3px] ml-auto" aria-label="Help"><svg class="size-4" viewBox="0 0 16 16"><circle cx="8" cy="8" r="8" fill="#9aa0a4"/><path d="M5.500 6.500c0-4 5-3.500 5-.5 0 2-2.500 2-2.500 4M8 11.500v2" fill="none" stroke="#fff" stroke-width="2"/></svg></button>
    </div>
  </section>

  <button class="absolute top-[178px] right-[19px] flex h-[35px] w-[55px] items-center justify-center gap-[10px] rounded bg-[#cebd9d]" aria-label="View options">
    <svg class="h-[22px] w-[23px]" viewBox="0 0 23 22"><path d="M1 3l11-2 10 3v13l-11 4-10-4z" fill="#fff" stroke="#333" stroke-width="1.500"/><path d="M1 4l10 3v14l-10-4z" fill="#c6c6c6"/><path d="M11 7l11-3v13l-11 4z" fill="#dedee0"/><path d="M1 3l11-2 10 3v13l-11 4-10-4z" fill="none" stroke="#333" stroke-width="1.500"/></svg>
    <svg class="h-[6px] w-[10px]" viewBox="0 0 10 6"><path d="M0 0h10L5 6z" fill="#222"/></svg>
  </button>

  <div class="absolute top-[384px] right-0 w-[41px] divide-y divide-[#ccc] border border-r-0 border-[#ccc] bg-white">
    <button class="flex h-[41px] w-full items-center justify-center" aria-label="Bill of materials"><svg class="size-[23px]" viewBox="0 0 23 23"><rect x="1" y="1" width="21" height="21" rx="3" fill="none" stroke="#333" stroke-width="1.500"/><path d="M4 6h12M9 10h10M9 14h10M9 18h10" stroke="#222" stroke-width="2.300"/><path d="M6 6v12h3M6 10h3M6 14h3" fill="none" stroke="#333"/></svg></button>
    <button class="flex h-[41px] w-full items-center justify-center" aria-label="Configurations"><svg class="size-6" viewBox="0 0 24 24"><path d="M6 8l9-4 9 4v11l-9 5-9-5zM6 8l9 5 9-5M15 13v11" fill="#fff" stroke="#333" stroke-width="1.500"/><path d="M0 0h13v10H0z" fill="#1b6ab5"/><path d="M1.500 2h3v2h-3zM5.500 2h3v2h-3zM9.500 2h2v2h-2zM1.500 6h3v2h-3zM5.500 6h3v2h-3zM9.500 6h2v2h-2z" fill="#a5d0f5"/></svg></button>
  </div>
</main>

<!-- Document tabs -->
<footer class="flex h-[38px] shrink-0 items-start border-b-2 border-black bg-[#d0d0d0] text-[17px]">
  <button class="ml-[11px] flex h-9 items-center" aria-label="Search tabs"><svg class="h-5 w-[21px]" viewBox="0 0 21 20"><path d="M0 1.200h21M14 7h7M15 12h6" stroke="#666" stroke-width="2.300"/><circle cx="7" cy="10" r="5.300" fill="none" stroke="#666" stroke-width="2.300"/><path d="M10 14l5 5" stroke="#666" stroke-width="2.500"/></svg></button>
  <button class="ml-[25px] flex h-9 items-center" aria-label="Add tab"><svg class="size-5" viewBox="0 0 20 20"><path d="M10 0v20M0 10h20" stroke="#666" stroke-width="3.500"/></svg></button>
  <button class="ml-[18px] flex h-[34px] w-[250px] items-center gap-[5px] rounded-b-md bg-[#e8e8e8] pl-[13px] text-[#777]"><svg class="size-6" viewBox="0 0 24 24"><g fill="#fff" stroke="#333" stroke-width="1.600" stroke-linejoin="round"><path d="M1 6h7l4 3v14H5l-4-4z"/><path d="M1 6l4 4h7M5 10v13M12 1h7l4 3v19h-7l-4-3z"/><path d="M12 1l4 4h7M16 5v18"/></g></svg>Part Studio 1</button>
  <button class="ml-[3px] flex h-[35px] w-[250px] items-center gap-[5px] rounded-b-md border-b-2 border-[#1b5faa] bg-white pt-px pl-[13px]"><svg class="size-6" viewBox="0 0 24 24"><path d="M1 1h17l5 4v18H6l-5-5z" fill="#fff" stroke="#333" stroke-width="1.600"/><path d="M1 1h14l3 5v10H6L2 12z" fill="#999" stroke="#444"/><path d="M2 2l4 4h12M6 6v16" fill="none" stroke="#444"/></svg>Assembly 1</button>
</footer>
</body>
</html>
